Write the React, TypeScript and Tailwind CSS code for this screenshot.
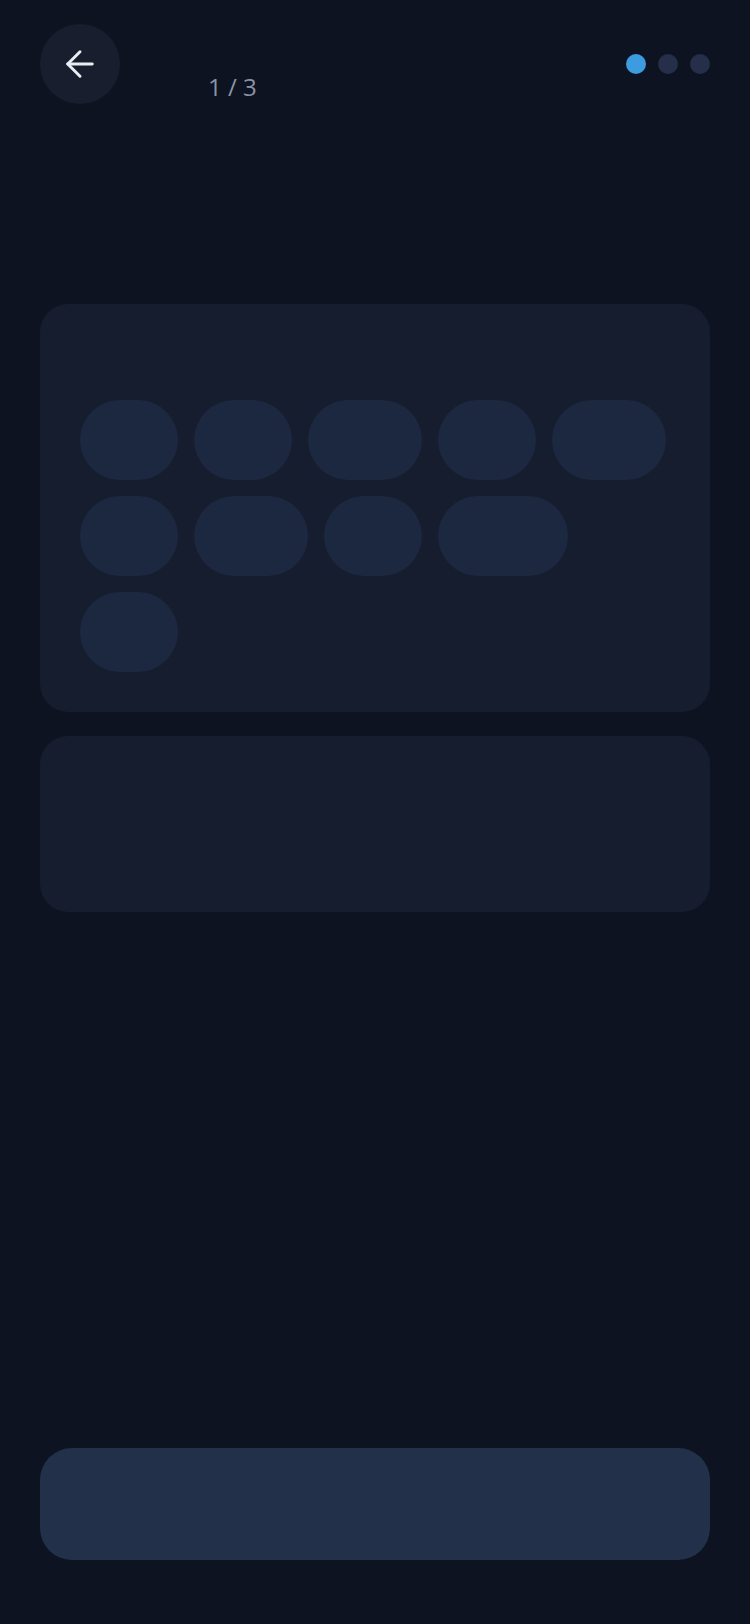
import { ArrowLeft } from "lucide-react"

export default function App() {
    const rows = [98, 98, 114, 98, 114, 98, 114, 98, 130, 98]

    return (
        <div className="min-h-[1624px] w-[750px] bg-[#0d1320] flex flex-col px-10 font-['Open_Sans',sans-serif]">
            {/* header */}
            <div className="flex flex-row items-start pt-6">
                <button className="w-20 h-20 rounded-full bg-[#181e2d] flex items-center justify-center text-[#e8ecf3]">
                    <ArrowLeft size={42} strokeWidth={1.7} />
                </button>
                <p className="ml-[88px] mt-[47px] text-[24px] leading-[32px] text-[#8a93a8]">1 / 3</p>
                <div className="ml-auto flex flex-row gap-3 mt-[30px]">
                    <div className="w-5 h-5 rounded-full bg-[#3d9be0]" />
                    <div className="w-5 h-5 rounded-full bg-[#252f4a]" />
                    <div className="w-5 h-5 rounded-full bg-[#252f4a]" />
                </div>
            </div>

            {/* chips card */}
            <div className="mt-[200px] rounded-[28px] bg-[#161d2e] px-10 pt-24 pb-10">
                <div className="flex flex-row flex-wrap gap-4">
                    {rows.map((w, i) => (
                        <div key={i} className="h-20 rounded-full bg-[#1c2840]" style={{ width: w }} />
                    ))}
                </div>
            </div>

            <div className="mt-6 h-[176px] rounded-[28px] bg-[#161d2e]" />

            <div className="flex-1" />

            <button className="h-[112px] rounded-[32px] bg-[#23304a] mb-16" />
        </div>
    )
}
